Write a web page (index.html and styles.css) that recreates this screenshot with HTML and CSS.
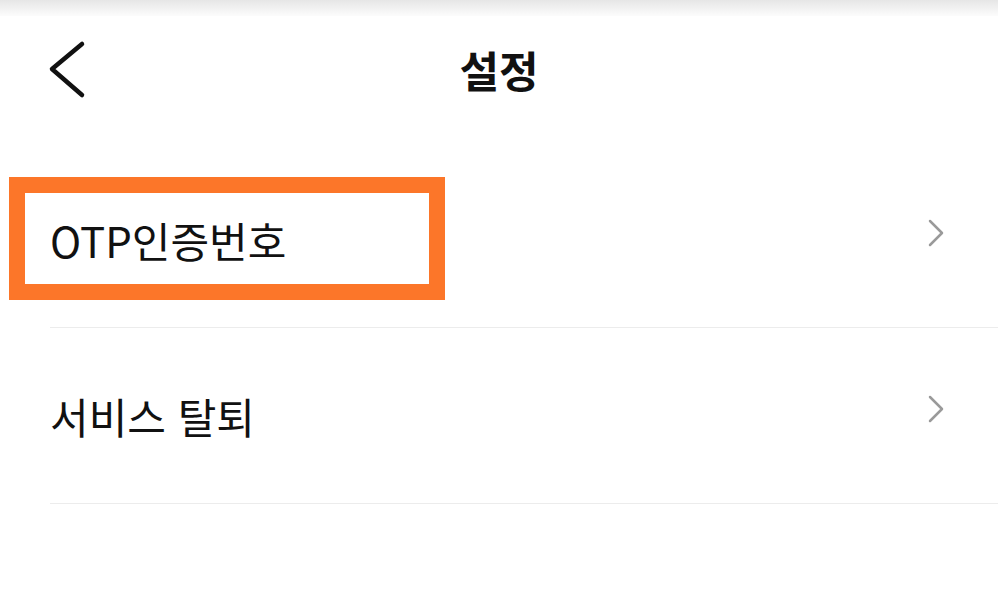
FILE: index.html
```html
<!DOCTYPE html>
<html lang="ko">
<head>
    <meta charset="UTF-8">
    <title>설정</title>
    <link rel="stylesheet" href="styles.css">
</head>
<body>
<div class="status"></div>
<div class="header">
    <span class="back">
        <svg width="38" height="60" viewBox="0 0 38 60">
            <polyline points="34,4 4,29 34,55" fill="none" stroke="#111" stroke-width="4.5" stroke-linecap="round" stroke-linejoin="round"/>
        </svg>
    </span>
    <h1 class="title">설정</h1>
</div>

<ul class="menu">
    <li class="item">
        <span class="label">OTP인증번호</span>
        <svg class="arrow" width="18" height="28" viewBox="0 0 18 28">
            <polyline points="3,2 15,14 3,26" fill="none" stroke="#9a9a9a" stroke-width="2.5" stroke-linecap="round" stroke-linejoin="round"/>
        </svg>
        <div class="mark"></div>
    </li>
    <li class="item">
        <span class="label">서비스 탈퇴</span>
        <svg class="arrow" width="18" height="28" viewBox="0 0 18 28">
            <polyline points="3,2 15,14 3,26" fill="none" stroke="#9a9a9a" stroke-width="2.5" stroke-linecap="round" stroke-linejoin="round"/>
        </svg>
    </li>
</ul>
</body>
</html>
```
FILE: styles.css
```css
body, ul, li, h1 {
    margin: 0;
    padding: 0;
    list-style: none;
}

body {
    background: #fff;
    color: #111;
    font-family: "Noto Sans CJK KR", "Noto Sans", sans-serif;
}

.status {
    height: 16px;
    background: linear-gradient(#e6e6e6, #fcfcfc);
}

.header {
    height: 108px;
    position: relative;
    display: flex;
    align-items: center;
    justify-content: center;
}

.back {
    position: absolute;
    left: 48px;
    top: 24px;
}

.back svg {
    display: block;
}

.title {
    font-size: 43px;
    font-weight: 700;
    line-height: 1;
    margin-top: -2px;
}

.menu {
    padding-top: 28px;
}

.item {
    position: relative;
    height: 175px;
    margin-left: 50px;
    padding-right: 53px;
    border-bottom: 1px solid #ececec;
    display: flex;
    align-items: center;
    justify-content: space-between;
}

.label {
    font-size: 42px;
    line-height: 1;
}

.arrow {
    display: block;
    margin-top: -14px;
}

/* 강조 표시 박스 */
.mark {
    position: absolute;
    left: -41px;
    top: 25px;
    width: 404px;
    height: 91px;
    border: 16px solid #fc7629;
}
```
